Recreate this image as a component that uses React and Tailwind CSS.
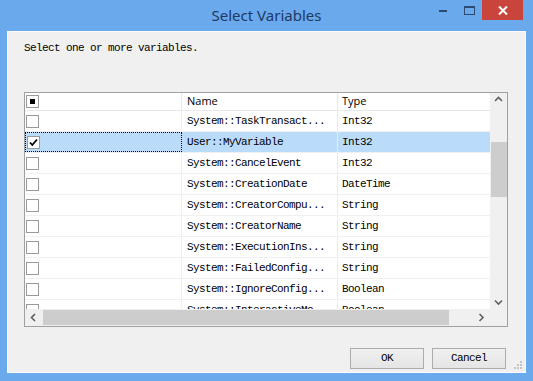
const rows = [
  { name: "System::TaskTransact...", type: "Int32" },
  { name: "User::MyVariable", type: "Int32", selected: true },
  { name: "System::CancelEvent", type: "Int32" },
  { name: "System::CreationDate", type: "DateTime" },
  { name: "System::CreatorCompu...", type: "String" },
  { name: "System::CreatorName", type: "String" },
  { name: "System::ExecutionIns...", type: "String" },
  { name: "System::FailedConfig...", type: "String" },
  { name: "System::IgnoreConfig...", type: "Boolean" },
  { name: "System::InteractiveMo...", type: "Boolean" },
];

const mono = "font-['Liberation_Mono',monospace] text-[11px] tracking-[-0.6px]";

function CheckBox({ state }) {
  return (
    <div className="w-[13px] h-[13px] border border-[#9a9a9a] bg-white flex items-center justify-center">
      {state === "mixed" && <div className="w-[5px] h-[5px] bg-black" />}
      {state === "checked" && (
        <svg width="9" height="9" viewBox="0 0 9 9">
          <path d="M1 4.5 L3.3 7 L8 1.5" fill="none" stroke="#000" strokeWidth="1.8" />
        </svg>
      )}
    </div>
  );
}

function Chevron({ dir }) {
  const d = {
    up: "M1 5 L4.5 1.5 L8 5",
    down: "M1 1.5 L4.5 5 L8 1.5",
    left: "M5 1 L1.5 4.5 L5 8",
    right: "M1.5 1 L5 4.5 L1.5 8",
  }[dir];
  const w = dir === "up" || dir === "down" ? 9 : 7;
  const h = dir === "up" || dir === "down" ? 7 : 9;
  return (
    <svg width={w} height={h} viewBox={`0 0 ${w} ${h}`}>
      <path d={d} fill="none" stroke="#606060" strokeWidth="1.6" />
    </svg>
  );
}

export default function App() {
  return (
    <div className="w-[533px] h-[381px] bg-[#6aa9ec] flex flex-col overflow-hidden">
      {/* title bar */}
      <div className="h-[31px] relative flex items-center justify-center">
        <span className="font-['Noto_Sans',sans-serif] text-[15px] text-[#1d3a63] -mt-[1px]">
          Select Variables
        </span>
        <div className="absolute right-[10px] top-0 flex items-start">
          <div className="w-[26px] h-[20px] flex items-center justify-center">
            <div className="w-[8px] h-[2px] bg-[#2c4a70] mt-[2px]" />
          </div>
          <div className="w-[26px] h-[20px] flex items-center justify-center">
            <div className="w-[11px] h-[9px] border border-[#2c4a70] border-t-2" />
          </div>
          <div className="w-[41px] h-[20px] bg-[#c9443a] flex items-center justify-center">
            <svg width="10" height="9" viewBox="0 0 10 9">
              <path d="M1 0.5 L9 8.5 M9 0.5 L1 8.5" stroke="#fff" strokeWidth="2" />
            </svg>
          </div>
        </div>
      </div>

      {/* client area */}
      <div className="flex-1 mx-[7px] mb-[8px] bg-[#f0f0f0] border border-[#fbfbfb] flex flex-col relative">
        <div className={`${mono} leading-[14px] text-black pl-[16px] pt-[9px]`}>
          Select one or more variables.
        </div>

        {/* grid */}
        <div className="mt-[37px] ml-[16px] w-[484px] border border-[#a0a0a0] bg-white flex flex-col">
          <div className="flex h-[216px]">
            <div className="w-[465px] overflow-hidden flex flex-col">
              <div className="flex h-[18px] border-b border-[#e8e8e8] shrink-0">
                <div className="w-[157px] border-r border-[#e8e8e8] flex items-center pl-[1px]">
                  <CheckBox state="mixed" />
                </div>
                <div className="w-[156px] border-r border-[#e8e8e8] flex items-center pl-[5px] font-['Open_Sans',sans-serif] text-[11px] text-black">
                  Name
                </div>
                <div className="flex-1 flex items-center pl-[4px] font-['Open_Sans',sans-serif] text-[11px] text-black">
                  Type
                </div>
              </div>
              {rows.map((r) => (
                <div
                  key={r.name}
                  className={`flex h-[21px] shrink-0 border-b border-[#f0f0f0] ${r.selected ? "bg-[#bbdbfa]" : ""}`}
                >
                  <div
                    className={`w-[157px] flex items-center pl-[1px] ${r.selected ? "border border-dotted border-black" : "border-r border-[#f0f0f0]"}`}
                  >
                    <CheckBox state={r.selected ? "checked" : "none"} />
                  </div>
                  <div className={`w-[156px] border-r border-[#ececec] flex items-center pl-[5px] ${mono} text-black`}>
                    {r.name}
                  </div>
                  <div className={`flex-1 flex items-center pl-[4px] ${mono} text-black`}>{r.type}</div>
                </div>
              ))}
            </div>
            {/* vertical scrollbar */}
            <div className="w-[17px] bg-[#f0f0f0] flex flex-col">
              <div className="h-[17px] flex items-center justify-center">
                <Chevron dir="up" />
              </div>
              <div className="flex-1 flex flex-col pt-[36px] pb-[100px] pl-[1px]">
                <div className="h-[55px] bg-[#cdcdcd]" />
              </div>
              <div className="h-[17px] flex items-center justify-center">
                <Chevron dir="down" />
              </div>
            </div>
          </div>
          {/* horizontal scrollbar */}
          <div className="flex h-[17px]">
            <div className="w-[465px] bg-[#f0f0f0] flex items-center">
              <div className="w-[17px] flex items-center justify-center">
                <Chevron dir="left" />
              </div>
              <div className="flex-1 h-[15px] bg-[#cdcdcd] mr-[24px] ml-[1px]" />
              <div className="w-[17px] flex items-center justify-center">
                <Chevron dir="right" />
              </div>
            </div>
            <div className="w-[17px] bg-[#f0f0f0]" />
          </div>
        </div>

        {/* buttons */}
        <div className="flex justify-end gap-[8px] mt-[21px] pr-[19px]">
          <button className={`w-[74px] h-[21px] border border-[#acacac] bg-gradient-to-b from-[#f0f0f0] to-[#e5e5e5] ${mono} text-black`}>
            OK
          </button>
          <button className={`w-[74px] h-[21px] border border-[#acacac] bg-gradient-to-b from-[#f0f0f0] to-[#e5e5e5] ${mono} text-black`}>
            Cancel
          </button>
        </div>

        <svg className="absolute right-[2px] bottom-[2px]" width="10" height="10" viewBox="0 0 10 10">
          <rect x="7" y="1" width="2" height="2" fill="#c5c5c5" />
          <rect x="4" y="4" width="2" height="2" fill="#c5c5c5" />
          <rect x="7" y="4" width="2" height="2" fill="#c5c5c5" />
          <rect x="1" y="7" width="2" height="2" fill="#c5c5c5" />
          <rect x="4" y="7" width="2" height="2" fill="#c5c5c5" />
          <rect x="7" y="7" width="2" height="2" fill="#c5c5c5" />
        </svg>
      </div>
    </div>
  );
}
